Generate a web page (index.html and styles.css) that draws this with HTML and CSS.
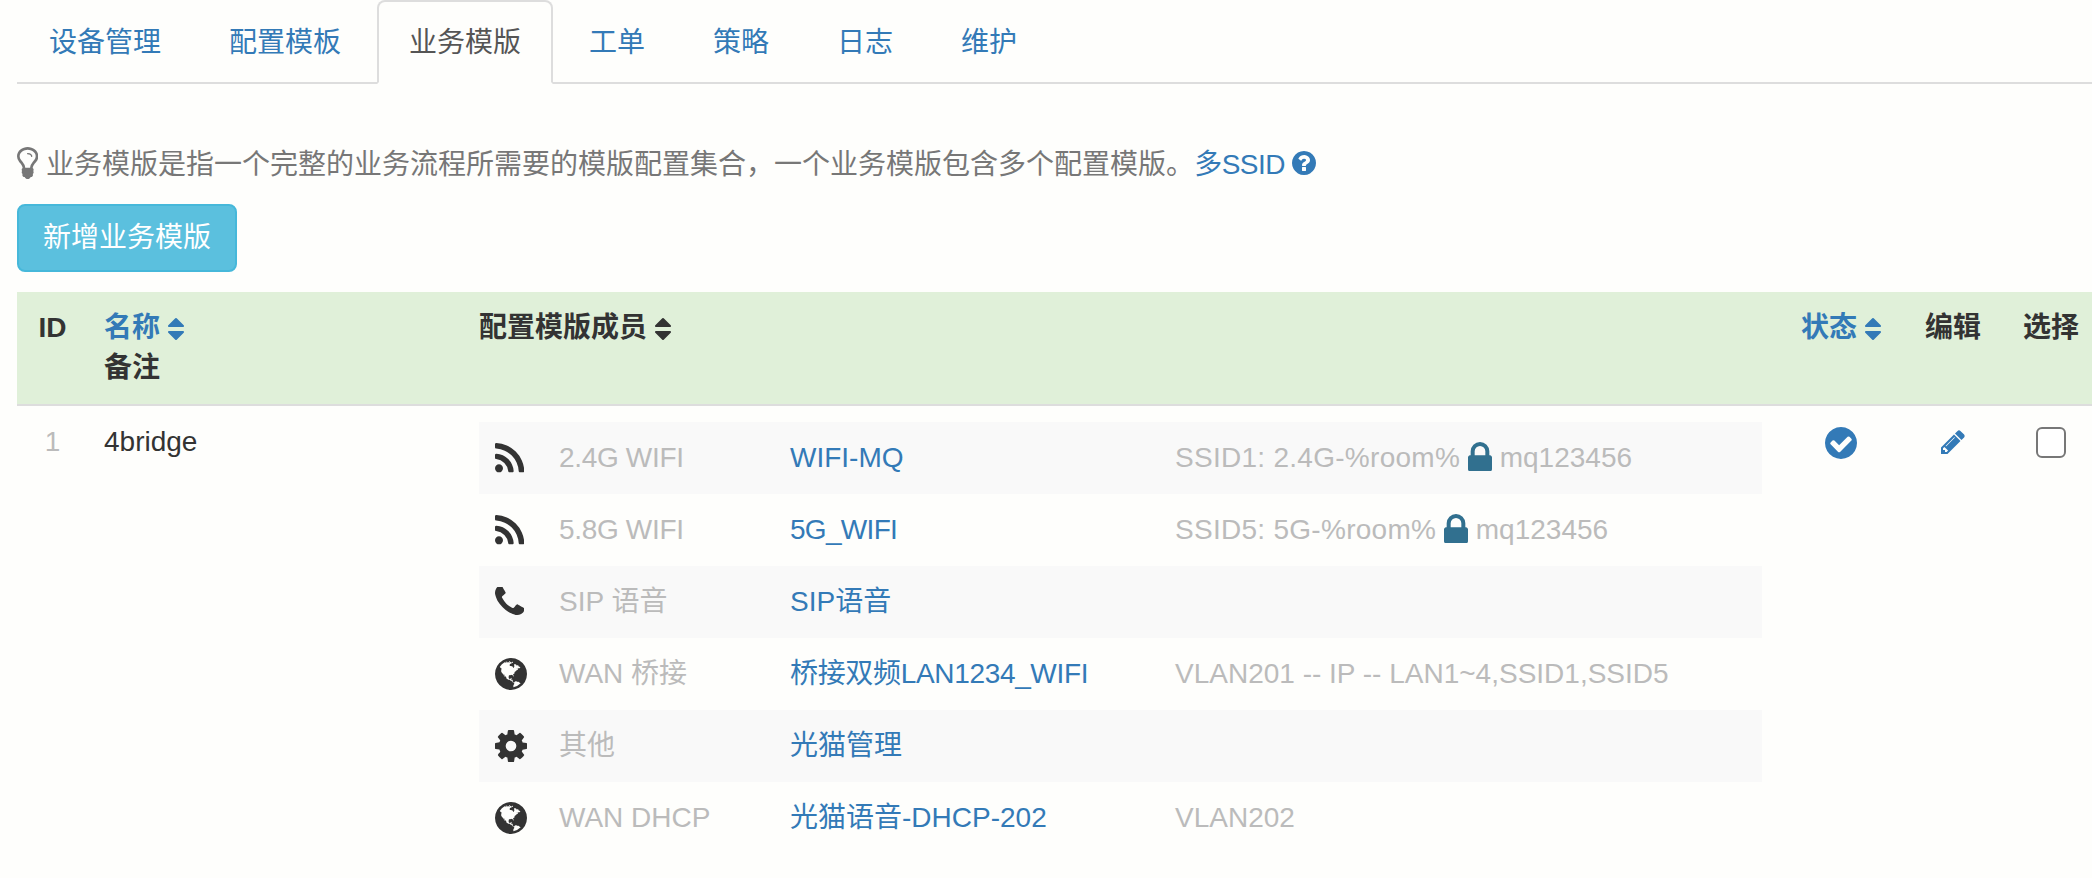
FILE: index.html
```html
<!DOCTYPE html>
<html lang="zh-CN">
<head>
<meta charset="utf-8">
<title>业务模版</title>
<link rel="stylesheet" href="styles.css">
</head>
<body>
<svg class="defs" aria-hidden="true">
  <defs>
    <path id="i-rss" d="M576 1344q0 80-56 136t-136 56-136-56-56-136 56-136 136-56 136 56 56 136zm512 123q2 28-17 48-18 21-47 21h-135q-25 0-43-16.5t-20-41.5q-22-229-184.5-391.5t-391.5-184.5q-25-2-41.5-20t-16.5-43v-135q0-29 21-47 17-17 43-17h5q160 13 306 80.5t259 181.5q114 113 181.5 259t80.5 306zm512 2q2 27-18 47-18 20-46 20h-143q-26 0-44.5-17.5t-19.5-42.5q-12-215-101-408.5t-231.5-336-336-231.5-408.5-102q-25-1-42.5-19.5t-17.5-43.5v-143q0-28 20-46 18-18 44-18h3q262 13 501.5 120t425.5 294q187 186 294 425.5t120 501.5z"/>
    <path id="i-phone" d="M1600 1240q0 27-10 70.5t-21 68.5q-21 50-122 106-94 51-186 51-27 0-53-3.5t-57.5-12.5-47-14.5-55.5-20.5-49-18q-98-35-175-83-127-79-264-216t-216-264q-48-77-83-175-3-9-18-49t-20.5-55.5-14.5-47-12.5-57.5-3.5-53q0-92 51-186 56-101 106-122 25-11 68.5-21t70.5-10q14 0 21 3 18 6 53 76 11 19 30 54t35 63.5 31 53.5q3 4 17.5 25t21.5 35.5 7 28.5q0 20-28.5 50t-62 55-62 53-28.5 46q0 9 5 22.5t8.5 20.5 14 24 11.5 19q76 137 174 235t235 174q2 1 19 11.5t24 14 20.5 8.5 22.5 5q18 0 46-28.5t53-62 55-62 50-28.5q14 0 28.5 7t35.5 21.5 25 17.5q25 15 53.5 31t63.5 35 54 30q70 35 76 53 3 7 3 21z"/>
    <path id="i-globe" d="M896 128q209 0 385.5 103t279.5 279.5 103 385.5-103 385.5-279.5 279.5-385.5 103-385.5-103-279.5-279.5-103-385.5 103-385.5 279.5-279.5 385.5-103zm274 521q-2 1-9.5 9.5t-13.5 9.5q2 0 4.5-5t5-11 3.5-7q6-7 22-15 14-6 52-12 34-8 51 11-2-2 9.5-13t14.5-12q3-2 15-4.5t15-7.5l2-22q-12 1-17.5-7t-6.5-21q0 2-6 8 0-7-4.5-8t-11.5 1-9 1q-10-3-15-7.5t-8-16.5-4-15q-2-5-9.5-11t-9.5-10q-1-2-2.5-5.5t-3-6.5-4-5.5-5.5-2.5-7 5-7.5 10-4.5 5q-3-2-6-1.5t-4.5 1-4.5 3-5 3.5q-3 2-8.5 3t-8.5 2q15-5-1-11-10-4-16-3 9-4 7.5-12t-8.5-14h5q-1-4-8.5-8.5t-17.5-8.5-13-6q-8-5-34-9.5t-33-.5q-5 6-4.5 10.5t4 14 3.5 12.5q1 6-5.5 13t-6.5 12q0 7 14 15.5t10 21.5q-3 8-16 16t-16 12q-5 8-1.5 18.5t10.5 16.5q2 2 1.5 4t-3.5 4.5-5.5 4-6.5 3.5l-3 2q-11 5-20.5-6t-13.5-26q-7-25-16-30-23-8-29 1-5-13-41-26-25-9-58-4 6-1 0-15-7-15-19-12 3-6 4-17.5t1-13.5q3-13 12-23 1-1 7-8.5t9.5-13.5.5-6q35 4 50-11 5-5 11.5-17t10.5-17q9-6 14-5.5t14.5 5.5 14.5 5q14 1 15.5-11t-7.5-20q12 1 3-17-4-7-8-9-12-4-27 5-8 4 2 8-1-1-9.5 10.5t-16.5 17.5-14-5q-1-1-5.5-13.5t-9.5-13.5q-8 0-16 15 3-8-11-15t-24-8q19-12-8-27-7-4-20.5-5t-19.5 4q-5 7-5.5 11.5t5 8 10.5 5.5 11.5 4 8.5 3q14 10 8 14-2 1-8.5 3.5t-11.5 4.5-6 4q-3 4 0 14t-2 14q-5-5-9-17.5t-7-16.5q7 9-25 6l-10-1q-4 0-16 2t-20.5 1-13.5-8q-4-8 0-20 1-4 4-2-4-3-11-9.5t-10-8.5q-46 15-94 41 6 1 12-1 5-2 13-6.5t10-5.5q34-14 42-7l5-5q14 16 20 25-7-4-30-1-20 6-22 12 7 12 5 18-4-3-11.5-10t-14.5-11-15-5q-16 0-22 1-146 80-235 222 7 7 12 8 4 1 5 9t2.5 11 11.5-3q9 8 3 19 1-1 44 27 19 17 21 21 3 11-10 18-1-2-9-9t-9-4q-3 5 .5 18.5t10.5 12.5q-7 0-9.5 16t-2.5 35.5-1 23.5l2 1q-3 12 5.5 34.5t21.5 19.5q-13 3 20 43 6 8 8 9 3 2 12 7.5t15 10 10 10.5q4 5 10 22.5t14 23.5q-2 6 9.5 20t10.5 23q-1 0-2.5 1t-2.5 1q3 7 15.5 14t15.5 13q1 3 2 10t3 11 8 2q2-20-24-62-15-25-17-29-3-5-5.5-15.5t-4.5-14.5q2 0 6 1.5t8.5 3.5 7.5 4 2 3q-3 7 2 17.5t12 18.5 17 19 12 13q6 6 14 19.5t0 13.5q9 0 20 10.5t17 19.5q5 8 8 26t5 24q2 7 8.5 13.5t12.5 9.5l16 8 13 7q5 2 18.5 10.5t21.5 11.5q10 4 16 4t14.5-2.5 13.5-3.5q15-2 29 15t21 21q36 19 55 11-2 1 .5 7.5t8 15.5 9 14.5 5.5 8.5q5 6 18 15t18 15q6-4 7-9-3 8 7 20t18 10q14-3 14-32-31 15-49-18 0-1-2.5-5.5t-4-8.5-2.5-8.5 0-7.5 5-3q9 0 10-3.5t-2-12.5-4-13q-1-8-11-20t-12-15q-5 9-16 8t-16-9q0 1-1.5 5.5t-1.5 6.5q-13 0-15-1 1-3 2.5-17.5t3.5-22.5q1-4 5.5-12t7.5-14.5 4-12.5-4.5-9.5-17.5-2.5q-19 1-26 20-1 3-3 10.5t-5 11.5-9 7q-7 3-24 2t-24-5q-13-8-22.5-29t-9.5-37q0-10 2.5-26.5t3-25-5.5-24.5q3-2 9-9.5t10-10.5q2-1 4.5-1.5t4.5 0 4-1.5 3-6q-1-1-4-3-3-3-4-3 7 3 28.5-1.5t27.5 1.5q15 11 22-2 0-1-2.5-9.5t-.5-13.5q5 27 29 9 3 3 15.5 5t17.5 5q3 2 7 5.5t5.5 4.5 5-.5 8.5-6.5q10 14 12 24 11 40 19 44 7 3 11 2t4.5-9.5 0-14-1.5-12.5l-1-8v-18l-1-8q-15-3-18.5-12t1.5-18.5 15-18.5q1-1 8-3.5t15.5-6.5 12.5-8q21-19 15-35 7 0 11-9-1 0-5-3t-7.5-5-4.5-2q9-5 2-16 5-3 7.5-11t7.5-10q9 12 21 2 8-8 1-16 5-7 20.5-10.5t18.5-9.5q7 2 8-2t1-12 3-12q4-5 15-9t13-5l17-11q3-4 0-4 18 2 31-11 10-11-6-20 3-6-3-9.5t-15-5.5q3-1 11.5-.5t10.5-1.5q15-10-7-16-17-5-43 12zm-163 877q206-36 351-189-3-3-12.5-4.5t-12.5-3.5q-18-7-24-8 1-7-2.5-13t-8-9-12.5-8-11-7q-2-2-7-6t-7-5.5-7.5-4.5-8.5-2-10 1l-3 1q-3 1-5.5 2.5t-5.5 3-4 3 0 2.5q-21-17-36-22-5-1-11-5.5t-10.5-7-10-1.5-11.5 7q-5 5-6 15t-2 13q-7-5 0-17.5t2-18.5q-3-6-10.5-4.5t-12 4.5-11.5 8.5-9 6.5-8.5 5.5-8.5 7.5q-3 4-6 12t-5 11q-2-4-11.5-6.5t-9.5-5.5q2 10 4 35t5 38q7 31-12 48-27 25-29 40-4 22 12 26 0 7-8 20.5t-7 21.5q0 6 2 16z"/>
    <path id="i-cog" d="M1152 896q0-106-75-181t-181-75-181 75-75 181 75 181 181 75 181-75 75-181zm512-109v222q0 12-8 23t-20 13l-185 28q-19 54-39 91 35 50 107 138 10 12 10 25t-9 23q-27 37-99 108t-94 71q-12 0-26-9l-138-108q-44 23-91 38-16 136-29 186-7 28-36 28h-222q-14 0-24.5-8.5t-11.5-21.5l-28-184q-49-16-90-37l-141 107q-10 9-25 9-14 0-25-11-126-114-165-168-7-10-7-23 0-12 8-23 15-21 51-66.5t54-70.5q-27-50-41-99l-183-27q-13-2-21-12.5t-8-23.5v-222q0-12 8-23t19-13l186-28q14-46 39-92-40-57-107-138-10-12-10-24 0-10 9-23 26-36 98.5-107.5t94.5-71.5q13 0 26 10l138 107q44-23 91-38 16-136 29-186 7-28 36-28h222q14 0 24.5 8.5t11.5 21.5l28 184q49 16 90 37l142-107q9-9 24-9 13 0 25 10 129 119 165 170 7 8 7 22 0 12-8 23-15 21-51 66.5t-54 70.5q26 50 41 98l183 28q13 2 21 12.5t8 23.5z"/>
    <path id="i-lock" d="M640 768h512v-192q0-106-75-181t-181-75-181 75-75 181v192zm832 96v576q0 40-28 68t-68 28h-960q-40 0-68-28t-28-68v-576q0-40 28-68t68-28h32v-192q0-184 132-316t316-132 316 132 132 316v192h32q40 0 68 28t28 68z"/>
    <path id="i-sort" d="M1408 1088q0 26-19 45l-448 448q-19 19-45 19t-45-19l-448-448q-19-19-19-45t19-45 45-19h896q26 0 45 19t19 45zm0-384q0 26-19 45t-45 19h-896q-26 0-45-19t-19-45 19-45l448-448q19-19 45-19t45 19l448 448q19 19 19 45z"/>
  </defs>
</svg>

<div class="page">
  <ul class="tabs">
    <li class="tab"><a href="#">设备管理</a></li>
    <li class="tab"><a href="#">配置模板</a></li>
    <li class="tab active"><a href="#">业务模版</a></li>
    <li class="tab"><a href="#">工单</a></li>
    <li class="tab"><a href="#">策略</a></li>
    <li class="tab"><a href="#">日志</a></li>
    <li class="tab"><a href="#">维护</a></li>
  </ul>

  <p class="intro"><svg class="bulb" viewBox="384 128 1024 1536"><path d="M1120 576q0 13-9.5 22.5t-22.5 9.5-22.5-9.5-9.5-22.5q0-46-54-71t-106-25q-13 0-22.5-9.5t-9.5-22.5 9.5-22.5 22.5-9.5q50 0 99.5 16t87 54 37.5 90zm160 0q0-72-34.5-134t-90-101.5-123-62-136.5-22.5-136.5 22.5-123 62-90 101.5-34.5 134q0 101 68 180 10 11 30.5 33t30.5 33q128 153 141 298h228q13-145 141-298 10-11 30.5-33t30.5-33q68-79 68-180zm128 0q0 155-103 268-45 49-74.5 87t-59.5 95.5-34 107.5q47 28 47 82 0 37-25 64 25 27 25 64 0 52-45 81 13 23 13 47 0 46-31.5 71t-77.5 25q-20 44-60 70t-87 26-87-26-60-70q-46 0-77.5-25t-31.5-71q0-24 13-47-45-29-45-81 0-37 25-64-25-27-25-64 0-54 47-82-4-50-34-107.5t-59.5-95.5-74.5-87q-103-113-103-268 0-99 44.5-184.5t117-142 164-89 186.5-32.5 186.5 32.5 164 89 117 142 44.5 184.5z"/></svg> 业务模版是指一个完整的业务流程所需要的模版配置集合，一个业务模版包含多个配置模版。<a class="help" href="#">多SSID <svg class="qmark" viewBox="128 128 1536 1536"><path d="M1024 1376v-192q0-14-9-23t-23-9h-192q-14 0-23 9t-9 23v192q0 14 9 23t23 9h192q14 0 23-9t9-23zm256-672q0-88-55.5-163t-138.5-116-170-41q-243 0-371 213-15 24 8 42l132 100q7 6 19 6 16 0 25-12 53-68 86-92 34-24 86-24 48 0 85.5 26t37.5 59q0 38-20 61t-68 45q-63 28-115.5 86.5t-52.5 125.5v36q0 14 9 23t23 9h192q14 0 23-9t9-23q0-19 21.5-49.5t54.5-49.5q32-18 49-28.5t46-35 44.5-48 28-60.5 12.5-81zm384 192q0 209-103 385.5t-279.5 279.5-385.5 103-385.5-103-279.5-279.5-103-385.5 103-385.5 279.5-279.5 385.5-103 385.5 103 279.5 279.5 103 385.5z"/></svg></a></p>

  <button class="btn-add" type="button">新增业务模版</button>

  <table class="grid">
    <colgroup>
      <col class="c-id"><col class="c-name"><col class="c-members"><col class="c-state"><col class="c-edit"><col class="c-pick">
    </colgroup>
    <thead>
      <tr>
        <th class="center">ID</th>
        <th><a href="#">名称 <svg class="sort" viewBox="384 192 1024 1408"><use href="#i-sort"/></svg></a><br>备注</th>
        <th>配置模版成员 <svg class="sort" viewBox="384 192 1024 1408"><use href="#i-sort"/></svg></th>
        <th class="center"><a href="#">状态 <svg class="sort" viewBox="384 192 1024 1408"><use href="#i-sort"/></svg></a></th>
        <th class="center">编辑</th>
        <th class="center">选择</th>
      </tr>
    </thead>
    <tbody>
      <tr>
        <td class="center muted">1</td>
        <td>4bridge</td>
        <td class="members">
          <table class="inner">
            <colgroup><col class="m-icon"><col class="m-type"><col class="m-link"><col></colgroup>
            <tr>
              <td><svg class="ic-29" viewBox="192 128 1408 1408"><use href="#i-rss"/></svg></td>
              <td class="muted tight">2.4G WIFI</td>
              <td><a href="#">WIFI-MQ</a></td>
              <td class="muted"><span class="wide">SSID1: 2.4G-%room%</span> <svg class="lock" viewBox="320 128 1152 1408"><use href="#i-lock"/></svg> mq123456</td>
            </tr>
            <tr>
              <td><svg class="ic-29" viewBox="192 128 1408 1408"><use href="#i-rss"/></svg></td>
              <td class="muted tight">5.8G WIFI</td>
              <td><a class="tighter" href="#">5G_WIFI</a></td>
              <td class="muted"><span class="wide">SSID5: 5G-%room%</span> <svg class="lock" viewBox="320 128 1152 1408"><use href="#i-lock"/></svg> mq123456</td>
            </tr>
            <tr>
              <td><svg class="ic-29" viewBox="192 192 1408 1408"><use href="#i-phone"/></svg></td>
              <td class="muted">SIP 语音</td>
              <td><a href="#">SIP语音</a></td>
              <td class="muted"></td>
            </tr>
            <tr>
              <td><svg class="ic-32" viewBox="128 128 1536 1536"><use href="#i-globe"/></svg></td>
              <td class="muted">WAN 桥接</td>
              <td><a class="tight" href="#">桥接双频LAN1234_WIFI</a></td>
              <td class="muted">VLAN201 -- IP -- LAN1~4,SSID1,SSID5</td>
            </tr>
            <tr>
              <td><svg class="ic-32" viewBox="128 128 1536 1536"><use href="#i-cog"/></svg></td>
              <td class="muted">其他</td>
              <td><a href="#">光猫管理</a></td>
              <td class="muted"></td>
            </tr>
            <tr>
              <td><svg class="ic-32" viewBox="128 128 1536 1536"><use href="#i-globe"/></svg></td>
              <td class="muted">WAN DHCP</td>
              <td><a href="#">光猫语音-DHCP-202</a></td>
              <td class="muted">VLAN202</td>
            </tr>
          </table>
        </td>
        <td class="center"><svg class="state" viewBox="128 128 1536 1536"><path d="M1412 734q0-28-18-46l-91-90q-19-19-45-19t-45 19l-408 407-226-226q-19-19-45-19t-45 19l-91 90q-18 18-18 46 0 27 18 45l362 362q19 19 45 19 27 0 46-19l543-543q18-18 18-45zm252 162q0 209-103 385.5t-279.5 279.5-385.5 103-385.5-103-279.5-279.5-103-385.5 103-385.5 279.5-279.5 385.5-103 385.5 103 279.5 279.5 103 385.5z"/></svg></td>
        <td class="center"><svg class="pencil" viewBox="128 128 1515 1536"><path d="M491 1536l91-91-235-235-91 91v107h128v128h107zm523-928q0-22-22-22-10 0-17 7l-542 542q-7 7-7 17 0 22 22 22 10 0 17-7l542-542q7-7 7-17zm-54-192l416 416-832 832h-416v-416zm683 96q0 53-37 90l-166 166-416-416 166-165q36-38 90-38 53 0 91 38l235 234q37 39 37 91z"/></svg></td>
        <td class="center"><input class="pick" type="checkbox" aria-label="选择"></td>
      </tr>
    </tbody>
  </table>
</div>
</body>
</html>
```

FILE: styles.css
```css
* { box-sizing: border-box; }
html, body { margin: 0; padding: 0; background: #fefefc; overflow: hidden; }
body {
  font-family: "Liberation Sans", "Noto Sans CJK SC", sans-serif;
  font-size: 28px;
  line-height: 40px;
  color: #333;
}
a { color: #337ab7; text-decoration: none; }
.defs { display: none; }
.page { padding-left: 17px; }
svg { fill: currentColor; }

.tabs {
  display: flex;
  list-style: none;
  margin: 0;
  padding: 0;
  border-bottom: 2px solid #ddd;
  height: 84px;
}
.tab { margin-right: 4px; height: 84px; }
.tab a {
  display: block;
  padding: 21px 30px 19px;
  border: 2px solid transparent;
  border-radius: 8px 8px 0 0;
  height: 84px;
}
.tab.active a {
  color: #555;
  background: #fefefc;
  border-color: #ddd #ddd transparent;
}

.intro { height: 40px; margin: 61px 0 19px; color: #777; }
.help { letter-spacing: -0.5px; }
.bulb { width: 21.33px; height: 32px; vertical-align: -5px; }
.qmark { width: 24px; height: 24px; vertical-align: -1px; }

.btn-add {
  display: block;
  width: 220px;
  height: 68px;
  padding: 12px 24px;
  font: inherit;
  color: #fff;
  background: #5bc0de;
  border: 2px solid #46b8da;
  border-radius: 8px;
}

.grid {
  width: 2083px;
  margin-top: 20px;
  table-layout: fixed;
  border-collapse: separate;
  border-spacing: 0;
}
.c-id { width: 71px; }
.c-name { width: 375px; }
.c-members { width: 1315px; }
.c-state { width: 126px; }
.c-edit { width: 98px; }
.c-pick { width: 98px; }

.grid th, .grid > tbody > tr > td { padding: 16px; vertical-align: top; text-align: left; }
.grid th { font-weight: 700; background: #e0f0d9; border-bottom: 2px solid #ddd; }
.grid .center { text-align: center; }
.sort { width: 16px; height: 22px; vertical-align: -3px; }
.muted { color: #bbb; }
.tight { letter-spacing: -0.33px; }
.tighter { letter-spacing: -0.7px; }
.wide { letter-spacing: 0.28px; }

.inner { width: 100%; table-layout: fixed; border-collapse: collapse; }
.m-icon { width: 64px; }
.m-type { width: 231px; }
.m-link { width: 385px; }
.inner td { padding: 16px; vertical-align: middle; height: 72px; white-space: nowrap; }
.inner tr:nth-child(odd) { background: #f9f9f9; }
.ic-29 { display: block; width: 29.33px; height: 29.33px; }
.ic-32 { display: block; width: 32px; height: 32px; }
.lock { width: 24px; height: 29.33px; color: #31708f; vertical-align: -4px; }

.state { display: block; width: 32px; height: 32px; margin: 5px auto 0; color: #337ab7; }
.pencil { display: block; width: 23.67px; height: 24px; margin: 8px auto 0; color: #337ab7; }
.pick {
  display: block;
  appearance: none;
  width: 30px;
  height: 31px;
  margin: 5px auto 0;
  background: #fff;
  border: 2.5px solid #777;
  border-radius: 6px;
}
```
